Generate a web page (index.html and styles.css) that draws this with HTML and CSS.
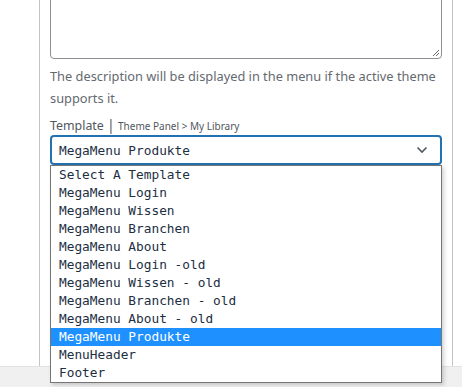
FILE: index.html
```html
<!DOCTYPE html>
<html>
<head>
  <link rel="stylesheet" href="styles.css">
</head>
<body>
  <div class="page">
    <div class="panel">
      <div class="field">
        <textarea class="desc-input" aria-label="Description"></textarea>
        <svg class="resize-grip" width="9" height="9" viewBox="0 0 9 9">
          <path d="M8 2 L2 8 M8 5 L5 8" stroke="#6b6b6b" stroke-width="1" fill="none"/>
        </svg>
      </div>
      <p class="description">The description will be displayed in the menu if the active theme supports it.</p>

      <div class="template-field">
        <label class="template-label">Template <span class="sep">|</span> <span class="hint">Theme Panel &gt; My Library</span></label>
        <div class="select-box">
          <span class="select-value">MegaMenu Produkte</span>
          <svg class="chevron" width="12" height="8" viewBox="0 0 12 8">
            <path d="M1.5 1.5 L6 6 L10.5 1.5" stroke="#50575e" stroke-width="1.6" fill="none"/>
          </svg>
        </div>

        <!-- open dropdown -->
        <ul class="dropdown">
          <li>Select A Template</li>
          <li>MegaMenu Login</li>
          <li>MegaMenu Wissen</li>
          <li>MegaMenu Branchen</li>
          <li>MegaMenu About</li>
          <li>MegaMenu Login -old</li>
          <li>MegaMenu Wissen - old</li>
          <li>MegaMenu Branchen - old</li>
          <li>MegaMenu About - old</li>
          <li class="selected">MegaMenu Produkte</li>
          <li>MenuHeader</li>
          <li>Footer</li>
        </ul>
      </div>
    </div>
    <div class="footer-bar"></div>
  </div>
</body>
</html>
```

FILE: styles.css
```css
* {
  box-sizing: border-box;
}

body {
  margin: 0;
  padding: 0;
  width: 462px;
  height: 387px;
  overflow: hidden;
  background: #fff;
  font-family: "Noto Sans", "Open Sans", sans-serif;
  color: #3c434a;
}

.page {
  display: flex;
  flex-direction: column;
  height: 387px;
}

.panel {
  margin-left: 39px;
  width: 414px;
  height: 366px;
  border-left: 1px solid #c3c4c7;
  border-right: 1px solid #c3c4c7;
  padding: 0 10px;
}

.field {
  position: relative;
  margin-top: -12px;
}

.desc-input {
  display: block;
  width: 392px;
  height: 71px;
  border: 1px solid #8c8f94;
  border-radius: 4px;
  resize: none;
  background: #fff;
}

.resize-grip {
  position: absolute;
  right: 2px;
  bottom: 2px;
}

.description {
  margin: 6px 0 0;
  font-size: 12.8px;
  line-height: 22px;
  color: #646970;
}

.template-field {
  position: relative;
  margin-top: 7px;
}

.template-label {
  display: block;
  font-size: 12.4px;
  line-height: 18px;
  color: #50575e;
}

.template-label .sep {
  font-size: 14px;
}

.template-label .hint {
  font-size: 10px;
}

.select-box {
  display: flex;
  align-items: center;
  justify-content: space-between;
  height: 30px;
  border: 2px solid #2271b1;
  border-radius: 4px;
  padding: 0 12px 0 7px;
  background: #fff;
}

.select-value {
  font-family: "DejaVu Sans Mono", "Liberation Mono", monospace;
  font-size: 12.8px;
  color: #1d2f43;
}

.dropdown {
  position: absolute;
  left: 0;
  top: 49px;
  width: 392px;
  margin: 0;
  padding: 0;
  list-style: none;
  background: #fff;
  border: 1px solid #767676;
  box-shadow: 2px 2px 4px rgba(0, 0, 0, 0.18);
  font-family: "DejaVu Sans Mono", "Liberation Mono", monospace;
  font-size: 12.8px;
  color: #1d2f43;
}

.dropdown li {
  height: 18px;
  line-height: 18px;
  padding-left: 8px;
  white-space: nowrap;
}

.dropdown li.selected {
  background: #1e90ff;
  color: #fff;
}

.footer-bar {
  flex: 1;
  background: #f0f0f1;
  border-top: 1px solid #e2e2e4;
}
```
